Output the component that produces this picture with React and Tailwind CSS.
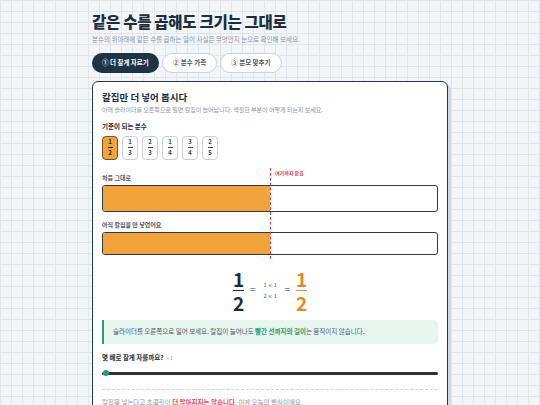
import { useState } from "react";

const fractions = [
  [1, 2],
  [1, 3],
  [2, 3],
  [1, 4],
  [3, 4],
  [2, 5],
];

function Frac({ n, d, className, lineClass }) {
  return (
    <div className={"flex flex-col items-center leading-none " + className}>
      <span>{n}</span>
      <span className={"my-[2px] h-[1px] w-full " + lineClass}></span>
      <span>{d}</span>
    </div>
  );
}

export default function App() {
  const [picked, setPicked] = useState(0);
  const [times, setTimes] = useState(1);

  return (
    <div className="min-h-[405px] bg-[#f3f6f9] bg-[linear-gradient(to_right,#dfe7ed_1px,transparent_1px),linear-gradient(to_bottom,#dfe7ed_1px,transparent_1px)] bg-[size:11px_11px] font-['Noto_Sans_CJK_KR',sans-serif] text-[#1e2d3b]">
      <div className="mx-auto w-[356px] pt-[9px]">
        <h1 className="text-[15.5px] font-black leading-[24px] tracking-[-0.3px]">같은 수를 곱해도 크기는 그대로</h1>
        <p className="mt-[2px] text-[6.5px] text-[#8795a2]">
          분수의 위아래에 같은 수를 곱하는 일이 사실은 무엇인지 눈으로 확인해 보세요.
        </p>

        <div className="mt-[8px] flex gap-[3px]">
          <button className="h-[20px] rounded-full bg-[#1e3345] px-[10px] text-[6.5px] font-bold text-white">① 더 잘게 자르기</button>
          <button className="h-[20px] rounded-full border border-[#c8d2da] bg-white px-[10px] text-[6.5px] font-bold text-[#4a5866]">② 분수 가족</button>
          <button className="h-[20px] rounded-full border border-[#c8d2da] bg-white px-[10px] text-[6.5px] font-bold text-[#4a5866]">③ 분모 맞추기</button>
        </div>

        <div className="mt-[8px] rounded-[6px] border border-[#243545] bg-white px-[9px] pt-[8px] pb-[6px] shadow-[3px_3px_0_#cddbe4]">
          <h2 className="text-[9.5px] font-bold leading-[14px]">칼집만 더 넣어 봅시다</h2>
          <p className="mt-[1px] text-[6px] text-[#8a96a3]">
            아래 슬라이더를 오른쪽으로 밀면 칼집이 늘어납니다. 색칠한 부분이 어떻게 되는지 보세요.
          </p>

          <div className="mt-[8px] text-[6.5px] font-bold">기준이 되는 분수</div>
          <div className="mt-[4px] flex gap-[4px]">
            {fractions.map(([n, d], i) => (
              <button
                key={i}
                onClick={() => setPicked(i)}
                className={
                  i === picked
                    ? "flex h-[24px] w-[16px] items-center justify-center rounded-[4px] border border-[#7a5220] bg-[#f2a33c] text-[6px] font-bold text-[#2b2115]"
                    : "flex h-[24px] w-[16px] items-center justify-center rounded-[4px] border border-[#c8d0d8] bg-white text-[6px] font-bold text-[#3d4a57]"
                }
              >
                <Frac n={n} d={d} className="w-[5px]" lineClass={i === picked ? "bg-[#2b2115]" : "bg-[#3d4a57]"} />
              </button>
            ))}
          </div>

          <div className="relative mt-[10px]">
            <div className="absolute left-[50%] top-[-2px] bottom-[-4px] border-l border-dashed border-[#d9414a]"></div>
            <div className="absolute left-[calc(50%+5px)] top-[-1px] text-[5px] font-bold text-[#d9414a]">여기까지 같음</div>

            <div className="pt-[3px] text-[6px] font-bold text-[#4a5562]">처음 그대로</div>
            <div className="mt-[3px] flex h-[27px] overflow-hidden rounded-[3px] border-[1.5px] border-[#2e3b47] bg-white">
              <div className="w-1/2 bg-[#f2a33c]"></div>
            </div>

            <div className="mt-[8px] text-[6px] font-bold text-[#4a5562]">아직 칼집을 안 넣었어요</div>
            <div className="mt-[3px] flex h-[23px] overflow-hidden rounded-[3px] border-[1.5px] border-[#2e3b47] bg-white">
              <div className="w-1/2 bg-[#f2a33c]"></div>
            </div>
          </div>

          <div className="mt-[14px] flex items-center justify-center gap-[6px] font-bold">
            <Frac n={1} d={2} className="text-[19px] text-[#1e2d3b]" lineClass="bg-[#1e2d3b]" />
            <span className="text-[9px] text-[#8a96a3]">=</span>
            <div className="flex flex-col items-center gap-[6px] px-[2px] text-[5px] leading-none text-[#3aa58a]">
              <span>1 × {times}</span>
              <span>2 × {times}</span>
            </div>
            <span className="text-[9px] text-[#8a96a3]">=</span>
            <Frac n={1} d={2} className="text-[19px] text-[#e08a2c]" lineClass="bg-[#e08a2c]" />
          </div>

          <div className="mt-[8px] rounded-r-[4px] border-l-[2px] border-[#2a9a7a] bg-[#e7f5ef] py-[7.5px] pl-[9px] text-[6.5px] text-[#4a5562]">
            슬라이더를 오른쪽으로 밀어 보세요. 칼집이 늘어나도 <b className="text-[#1f9a74]">빨간 선까지의 길이</b>는 움직이지 않습니다.
          </div>

          <div className="mt-[9px] text-[6.5px] font-bold">
            몇 배로 잘게 자를까요? <span className="text-[5px] font-normal text-[#8a96a3]">×{times}</span>
          </div>
          <div className="relative mt-[7px] h-[6px]">
            <div className="absolute left-0 right-0 top-[1.5px] h-[3px] rounded-full bg-[#2f3337]"></div>
            <div className="absolute left-[1px] top-0 h-[6px] w-[6px] rounded-full bg-[#2a9a7a]"></div>
          </div>

          <div className="mt-[13px] border-t border-dashed border-[#cfd6dc] pt-[8px] text-[6.5px] text-[#8a96a3]">
            칼집을 넣는다고 초콜릿이 <b className="text-[#e04a4a]">더 많아지지는 않습니다</b>. 이게 오늘의 핵심이에요.
          </div>
        </div>
      </div>
    </div>
  );
}
